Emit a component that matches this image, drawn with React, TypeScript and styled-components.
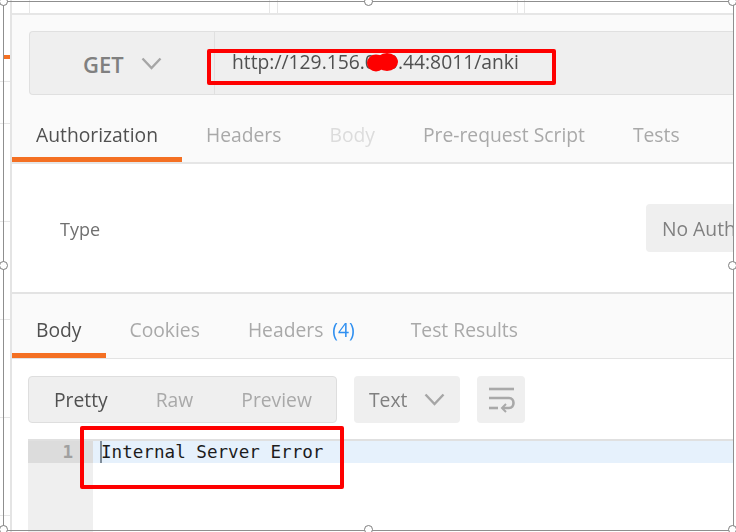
import styled, { createGlobalStyle } from "styled-components";

const GlobalStyle = createGlobalStyle`
  html, body {
    margin: 0;
    padding: 0;
    background: #fff;
  }
`;

const Page = styled.div`
  position: relative;
  display: flex;
  width: 736px;
  height: 532px;
  overflow: hidden;
  background: #fff;
  font-family: "Open Sans", sans-serif;
  font-size: 19.3px;
  color: #a9a9a9;
`;

const Blurred = styled.div`
  display: flex;
  width: 100%;
  height: 100%;
  filter: blur(0.5px);
`;

const SideGutter = styled.aside`
  flex: 0 0 12px;
  padding: 55px 0 0 3px;
  box-sizing: border-box;
  border-right: 2px solid #e4e4e4;
  background: repeating-linear-gradient(
    to bottom,
    #fff 0,
    #fff 26px,
    #e6e6e6 26px,
    #e6e6e6 27px,
    #fff 27px,
    #fff 98px
  ) 0 97px;
`;

const OrangeMark = styled.div`
  width: 7px;
  height: 4px;
  background: #f47023;
`;

const Main = styled.main`
  flex: 0 0 722px;
  display: flex;
  flex-direction: column;
  overflow: hidden;
`;

const TopStrip = styled.div`
  display: grid;
  grid-template-columns: 17px 240px 8px 240px 7px 1fr;
  height: 13px;
  border-bottom: 2px solid #e6e6e6;
`;

const TopCell = styled.div`
  border-left: 1px solid #e6e6e6;

  &:first-child {
    border-left: none;
  }
`;

const RequestArea = styled.section`
  padding-top: 16px;
  background: #fafafa;
  border-bottom: 2px solid #e6e6e6;
`;

const UrlBar = styled.div`
  display: flex;
  height: 62px;
  margin-left: 17px;
  background: #efefef;
  border: 1px solid #e0e0e0;
  border-right: none;
  border-radius: 4px 0 0 4px;
`;

const MethodPicker = styled.div`
  flex: 0 0 185px;
  display: flex;
  align-items: center;
  gap: 17px;
  padding: 1px 0 0 53px;
  box-sizing: border-box;
  border-right: 1px solid #e0e0e0;
  font-size: 22px;
  font-weight: 600;
  color: #808080;
`;

const UrlText = styled.div`
  padding: 18px 0 0 17px;
  font-size: 19.3px;
  line-height: 24px;
  color: #505050;
`;

const TabRow = styled.div<{ $height: number; $top: number }>`
  display: flex;
  height: ${(p) => p.$height}px;
  box-sizing: border-box;
  padding-top: ${(p) => p.$top}px;
`;

const Tab = styled.div<{ $active?: boolean; $disabled?: boolean; $extra?: number }>`
  display: flex;
  align-items: center;
  gap: 9px;
  padding: 0 ${(p) => 24 + (p.$extra ?? 0)}px 0 24px;
  border-bottom: 5px solid ${(p) => (p.$active ? "#f47023" : "transparent")};
  color: ${(p) => (p.$active ? "#505050" : p.$disabled ? "#dcdcdc" : "#a9a9a9")};
`;

const Count = styled.span`
  color: #2f8ff0;
`;

const AuthSection = styled.section`
  display: flex;
  align-items: center;
  height: 128px;
  padding-left: 48px;
  border-bottom: 2px solid #e3e3e3;
`;

const FieldLabel = styled.div`
  flex: 0 0 586px;
  padding-top: 1px;
  font-size: 18px;
  color: #707070;
`;

const AuthSelect = styled.div`
  flex: 0 0 200px;
  display: flex;
  align-items: center;
  height: 48px;
  padding-left: 16px;
  border-radius: 4px;
  background: #efefef;
  color: #808080;
  white-space: nowrap;
`;

const ResponseTabs = styled.section`
  background: #fafafa;
  border-bottom: 1px solid #e3e3e3;
`;

const Toolbar = styled.div`
  display: flex;
  gap: 17px;
  height: 47px;
  padding: 17px 0 16px 16px;
`;

const ViewGroup = styled.div`
  display: flex;
  align-items: center;
  gap: 48px;
  width: 309px;
  padding-left: 25px;
  box-sizing: border-box;
  background: #efefef;
  border: 1px solid #dedede;
  border-radius: 4px;
`;

const ViewOption = styled.span<{ $active?: boolean }>`
  color: ${(p) => (p.$active ? "#505050" : "#a9a9a9")};
`;

const LangSelect = styled.div`
  display: flex;
  align-items: center;
  gap: 17px;
  width: 106px;
  padding-left: 15px;
  box-sizing: border-box;
  background: #efefef;
  border-radius: 4px;
  color: #808080;
`;

const WrapButton = styled.div`
  display: flex;
  align-items: center;
  justify-content: center;
  width: 48px;
  background: #efefef;
  border-radius: 4px;
`;

const Editor = styled.div`
  flex: 1;
  display: flex;
  margin-left: 16px;
  border-top: 2px solid #e0e0e0;
`;

const LineGutter = styled.div`
  flex: 0 0 65px;
  background: #efefef;
`;

const LineNumber = styled.div`
  height: 22px;
  padding-right: 20px;
  box-sizing: border-box;
  background: #dcdcdc;
  font-family: "DejaVu Sans Mono", monospace;
  font-size: 17.6px;
  font-weight: 700;
  line-height: 23px;
  text-align: right;
  color: #a0a0a0;
`;

const CodeColumn = styled.div`
  flex: 1;
`;

const ActiveLine = styled.div`
  display: flex;
  height: 22px;
  padding-left: 7px;
  background: #e6f1fc;
  font-family: "DejaVu Sans Mono", monospace;
  font-size: 17.6px;
  line-height: 23px;
  color: #1c1c1c;
  white-space: pre;
`;

const Cursor = styled.span`
  width: 2px;
  margin-right: -1px;
  background: #7f8c99;
`;

const RedBox = styled.div<{ $x: number; $y: number; $w: number; $h: number }>`
  position: absolute;
  left: ${(p) => p.$x}px;
  top: ${(p) => p.$y}px;
  width: ${(p) => p.$w}px;
  height: ${(p) => p.$h}px;
  box-sizing: border-box;
  border: 4px solid #fe0000;
  border-radius: 2px;
`;

const Blot = styled.svg`
  position: absolute;
  left: 366px;
  top: 52px;
`;

const Selection = styled.div`
  position: absolute;
  left: 3px;
  top: 1px;
  width: 731px;
  height: 530px;
  box-sizing: border-box;
  border: 1px solid #8f8f8f;
`;

const Handle = styled.span<{ $x: string; $y: string }>`
  position: absolute;
  left: ${(p) => p.$x};
  top: ${(p) => p.$y};
  width: 9px;
  height: 9px;
  margin: -5px 0 0 -5px;
  box-sizing: border-box;
  border: 1px solid #7d7d7d;
  border-radius: 50%;
  background: #fff;
`;

const handles: [string, string][] = [
  ["0%", "0%"],
  ["50%", "0%"],
  ["100%", "0%"],
  ["0%", "50%"],
  ["100%", "50%"],
  ["0%", "100%"],
  ["50%", "100%"],
  ["100%", "100%"],
];

function Chevron() {
  return (
    <svg width="21" height="13" viewBox="0 0 21 13" fill="none" stroke="#a6a6a6" strokeWidth="2.4">
      <path d="M1.5 1.5 L10.5 11 L19.5 1.5" />
    </svg>
  );
}

function WrapIcon() {
  return (
    <svg width="27" height="26" viewBox="0 0 27 26" fill="none" stroke="#a9a9a9" strokeWidth="2.6">
      <path d="M1 2 H26" />
      <path d="M1 11 H21 C27 11 27 21 21 21 H15" />
      <path d="M18 17 L14 21 L18 25" strokeWidth="2" />
      <path d="M1 21 H10" />
    </svg>
  );
}

export default function App() {
  return (
    <Page>
      <GlobalStyle />
      <Blurred>
        <SideGutter>
          <OrangeMark />
        </SideGutter>
        <Main>
          <TopStrip>
            <TopCell />
            <TopCell />
            <TopCell />
            <TopCell />
            <TopCell />
            <TopCell />
          </TopStrip>

          <RequestArea>
            <UrlBar>
              <MethodPicker>
                GET
                <Chevron />
              </MethodPicker>
              <UrlText>http://129.156.000.44:8011/anki</UrlText>
            </UrlBar>
            <TabRow $height={67} $top={16}>
              <Tab $active>Authorization</Tab>
              <Tab>Headers</Tab>
              <Tab $disabled>Body</Tab>
              <Tab>Pre-request Script</Tab>
              <Tab>Tests</Tab>
            </TabRow>
          </RequestArea>

          <AuthSection>
            <FieldLabel>Type</FieldLabel>
            <AuthSelect>No Auth</AuthSelect>
          </AuthSection>

          <ResponseTabs>
            <TabRow $height={64} $top={11}>
              <Tab $active>Body</Tab>
              <Tab>Cookies</Tab>
              <Tab $extra={8}>
                Headers <Count>(4)</Count>
              </Tab>
              <Tab>Test Results</Tab>
            </TabRow>
          </ResponseTabs>

          <Toolbar>
            <ViewGroup>
              <ViewOption $active>Pretty</ViewOption>
              <ViewOption>Raw</ViewOption>
              <ViewOption>Preview</ViewOption>
            </ViewGroup>
            <LangSelect>
              Text
              <Chevron />
            </LangSelect>
            <WrapButton>
              <WrapIcon />
            </WrapButton>
          </Toolbar>

          <Editor>
            <LineGutter>
              <LineNumber>1</LineNumber>
            </LineGutter>
            <CodeColumn>
              <ActiveLine>
                <Cursor />
                Internal Server Error
              </ActiveLine>
            </CodeColumn>
          </Editor>
        </Main>
      </Blurred>

      <Blot width="34" height="22" viewBox="0 0 34 22">
        <ellipse cx="10" cy="11" rx="9" ry="8.5" fill="#fe0000" />
        <ellipse cx="21" cy="10" rx="11" ry="9" fill="#fe0000" />
      </Blot>
      <RedBox $x={207} $y={49} $w={349} $h={36} />
      <RedBox $x={80} $y={426} $w={264} $h={63} />

      <Selection>
        {handles.map(([x, y]) => (
          <Handle key={x + y} $x={x} $y={y} />
        ))}
      </Selection>
    </Page>
  );
}
